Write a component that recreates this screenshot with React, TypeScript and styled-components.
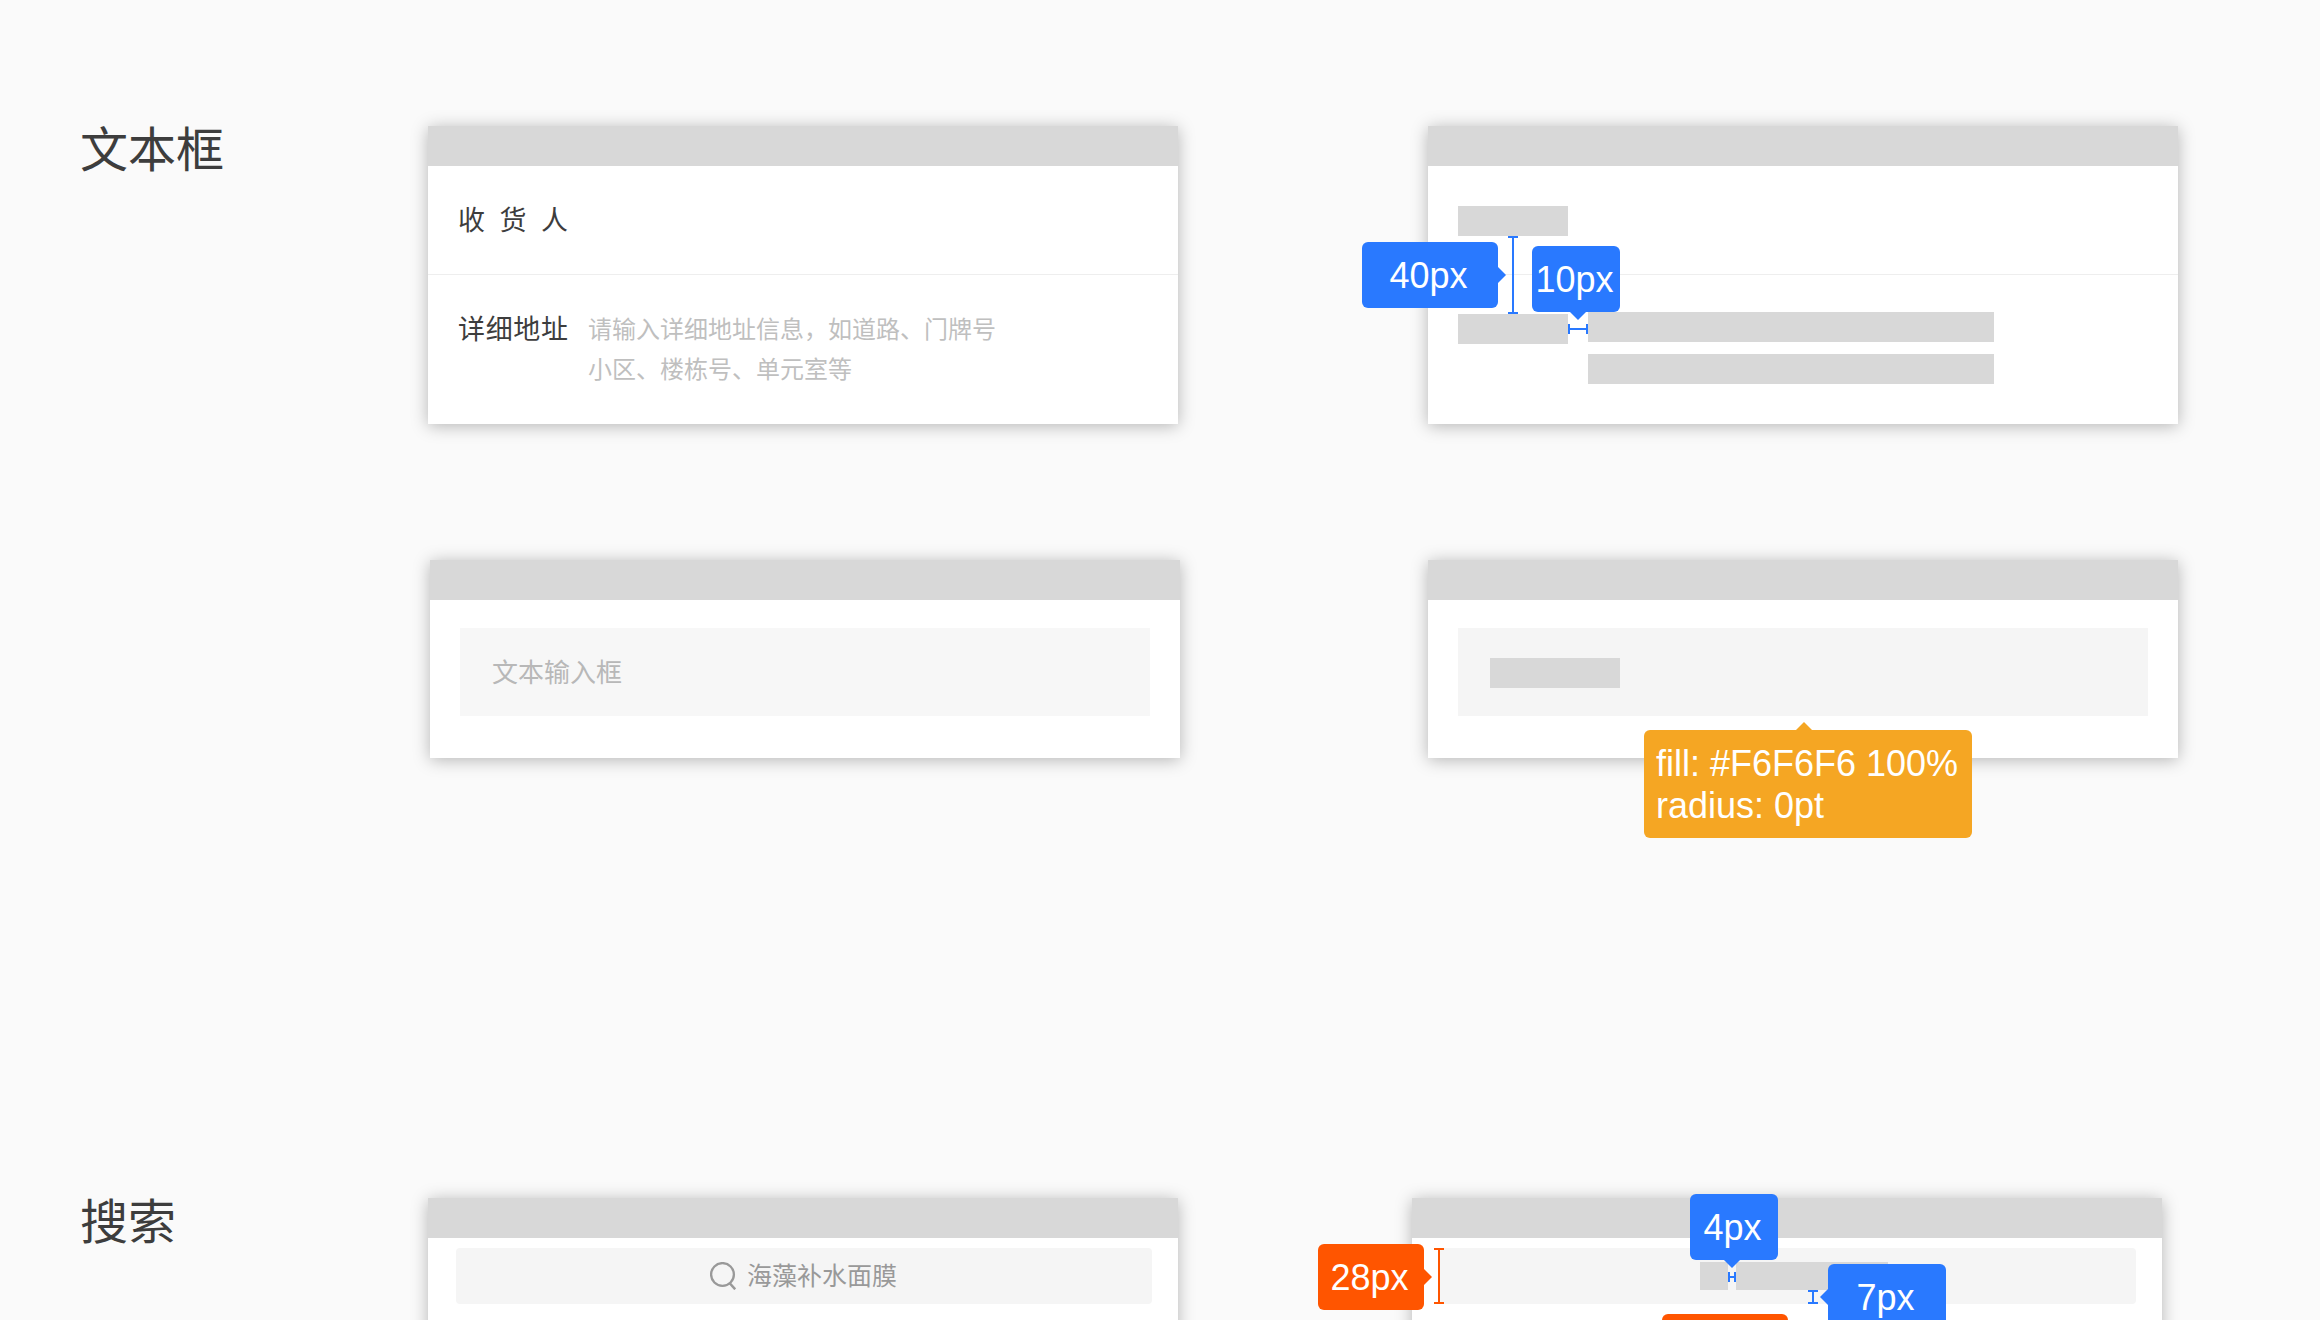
import React from "react";
import styled, { createGlobalStyle, css } from "styled-components";

const BLUE = "#2979ff";
const ORANGE = "#ff5500";
const AMBER = "#f5a623";

const GlobalStyle = createGlobalStyle`
  *, *::before, *::after { box-sizing: border-box; }
  body {
    margin: 0;
    background: #fafafa;
    color: #3d3d3d;
    font-family: "Liberation Sans", "Noto Sans CJK SC", sans-serif;
  }
  input, textarea { font-family: inherit; }
`;

const Page = styled.main`
  height: 100vh;
  overflow: hidden;
  padding: 126px 142px 0 80px;
  display: flex;
  flex-direction: column;
  gap: 440px;
`;

const Section = styled.section`
  display: flex;
  align-items: flex-start;
`;

const Title = styled.h2`
  margin: 0;
  flex: 0 0 348px;
  font-size: 48px;
  line-height: 50px;
  font-weight: 400;
`;

const Examples = styled.div`
  flex: 1;
  display: flex;
  flex-direction: column;
  gap: 136px;
`;

const Pair = styled.div<{ $gap?: number; $start?: number; $end?: number }>`
  display: grid;
  grid-template-columns: 1fr 1fr;
  column-gap: ${(p) => p.$gap ?? 250}px;
  padding-left: ${(p) => p.$start ?? 0}px;
  padding-right: ${(p) => p.$end ?? 0}px;
`;

const Card = styled.article`
  position: relative;
  background: #fff;
  box-shadow: 0 2px 16px rgba(0, 0, 0, 0.28);
`;

const StatusBar = styled.div`
  height: 40px;
  background: #d8d8d8;
`;

const FormRow = styled.div<{ $tall?: boolean }>`
  display: flex;
  gap: 20px;
  padding: 35px 30px 33px;
  align-items: flex-start;
  & + & { border-top: 1px solid #eee; }
  ${(p) => p.$tall && css`padding-bottom: 34px;`}
`;

const Label = styled.label`
  flex: 0 0 110px;
  font-size: 27px;
  line-height: 40px;
  font-weight: 400;
  text-align-last: justify;
  white-space: nowrap;
`;

const fieldReset = css`
  display: block;
  flex: 1;
  min-width: 0;
  margin: 0;
  padding: 0;
  border: 0;
  outline: 0;
  background: transparent;
  color: #3d3d3d;
  font-weight: 400;
  &::placeholder { color: #bfbfbf; opacity: 1; }
`;

const LineInput = styled.input`
  ${fieldReset}
  height: 40px;
  font-size: 24px;
`;

const AreaInput = styled.textarea`
  ${fieldReset}
  height: 80px;
  resize: none;
  overflow: hidden;
  font-size: 24px;
  line-height: 40px;
`;

const BoxBody = styled.div`
  padding: 28px 30px 42px;
`;

const BoxInput = styled.input`
  ${fieldReset}
  width: 100%;
  height: 88px;
  padding: 2px 32px 0;
  background: #f7f7f7;
  font-size: 26px;
  &::placeholder { color: #b8b8b8; }
`;

const BoxOutline = styled.div`
  display: flex;
  align-items: center;
  height: 88px;
  padding: 2px 32px 0;
  background: #f5f5f5;
`;

const Block = styled.div<{ $w: number; $h?: number }>`
  width: ${(p) => p.$w}px;
  height: ${(p) => p.$h ?? 30}px;
  background: #d8d8d8;
`;

const OutlineRow = styled.div<{ $tall?: boolean }>`
  display: flex;
  gap: 20px;
  align-items: flex-start;
  padding: 40px 30px 38px;
  & + & { border-top: 1px solid #eee; }
  ${(p) => p.$tall && css`padding-top: 37px; padding-bottom: 40px;`}
`;

const LabelCell = styled.div`
  padding-top: 2px;
`;

const Lines = styled.div`
  display: flex;
  flex-direction: column;
  gap: 12px;
`;

const SearchBody = styled.div`
  padding: 10px 26px 42px 28px;
`;

const SearchBox = styled.label`
  display: flex;
  align-items: center;
  justify-content: center;
  gap: 11px;
  height: 56px;
  border-radius: 4px;
  background: #f5f5f5;
`;

const SearchInput = styled.input`
  ${fieldReset}
  flex: 0 0 151px;
  height: 40px;
  font-size: 25px;
  &::placeholder { color: #999; }
`;

const SearchOutline = styled.div`
  display: flex;
  align-items: center;
  gap: 8px;
  height: 56px;
  padding-left: 260px;
  border-radius: 4px;
  background: #f5f5f5;
`;

type Side = "left" | "right" | "top" | "bottom";

const arrows: Record<Side, (shift: number) => ReturnType<typeof css>> = {
  right: () => css`left: 100%; top: 50%; margin-top: -8px; width: 8px; height: 16px; clip-path: polygon(0 0, 100% 50%, 0 100%);`,
  left: () => css`right: 100%; top: 50%; margin-top: -8px; width: 8px; height: 16px; clip-path: polygon(100% 0, 0 50%, 100% 100%);`,
  bottom: (shift) => css`top: 100%; left: 50%; margin-left: ${shift - 8}px; width: 16px; height: 8px; clip-path: polygon(0 0, 100% 0, 50% 100%);`,
  top: (shift) => css`bottom: 100%; left: 50%; margin-left: ${shift - 8}px; width: 16px; height: 8px; clip-path: polygon(50% 0, 100% 100%, 0 100%);`,
};

const Tag = styled.div<{ $x: number; $y: number; $w: number; $color: string; $side?: Side; $shift?: number }>`
  position: absolute;
  left: ${(p) => p.$x}px;
  top: ${(p) => p.$y}px;
  width: ${(p) => p.$w}px;
  height: 66px;
  padding-right: 3px;
  border-radius: 6px;
  background: ${(p) => p.$color};
  color: #fff;
  font-size: 36px;
  line-height: 68px;
  text-align: center;
  white-space: nowrap;
  &::after {
    content: ${(p) => (p.$side ? '""' : "none")};
    position: absolute;
    background: inherit;
    ${(p) => p.$side && arrows[p.$side](p.$shift ?? 0)}
  }
`;

const NoteTag = styled(Tag)`
  height: auto;
  padding: 13px 12px 11px;
  line-height: 42px;
  text-align: left;
`;

const Measure = styled.div<{ $x: number; $y: number; $length: number; $color: string; $vertical?: boolean }>`
  position: absolute;
  left: ${(p) => p.$x}px;
  top: ${(p) => p.$y}px;
  width: ${(p) => (p.$vertical ? 10 : p.$length)}px;
  height: ${(p) => (p.$vertical ? p.$length : 10)}px;
  border: solid ${(p) => p.$color};
  border-width: ${(p) => (p.$vertical ? "2px 0" : "0 2px")};
  &::before {
    content: "";
    position: absolute;
    background: ${(p) => p.$color};
    ${(p) =>
      p.$vertical
        ? css`left: 4px; width: 2px; top: 0; bottom: 0;`
        : css`top: 4px; height: 2px; left: 0; right: 0;`}
  }
`;

function SearchIcon() {
  return (
    <svg width="26" height="28" viewBox="0 0 26 28" fill="none" stroke="#999" strokeWidth="2.3" aria-hidden="true">
      <circle cx="12.5" cy="12.5" r="11.4" />
      <path d="M19.5 21 L25.2 27.3" strokeWidth="2.5" />
    </svg>
  );
}

export default function App() {
  return (
    <>
      <GlobalStyle />
      <Page>
        <Section>
          <Title>文本框</Title>
          <Examples>
            <Pair>
              <Card>
                <StatusBar />
                <FormRow>
                  <Label htmlFor="receiver">收 货 人</Label>
                  <LineInput id="receiver" type="text" />
                </FormRow>
                <FormRow $tall>
                  <Label htmlFor="address">详细地址</Label>
                  <AreaInput
                    id="address"
                    rows={2}
                    placeholder={"请输入详细地址信息，如道路、门牌号\n小区、楼栋号、单元室等"}
                  />
                </FormRow>
              </Card>
              <Card>
                <StatusBar />
                <OutlineRow>
                  <Block $w={110} />
                </OutlineRow>
                <OutlineRow $tall>
                  <LabelCell>
                    <Block $w={110} />
                  </LabelCell>
                  <Lines>
                    <Block $w={406} />
                    <Block $w={406} />
                  </Lines>
                </OutlineRow>
                <Measure $x={80} $y={110} $length={78} $color={BLUE} $vertical />
                <Tag $x={-66} $y={116} $w={136} $color={BLUE} $side="right">40px</Tag>
                <Measure $x={140} $y={198} $length={20} $color={BLUE} />
                <Tag $x={104} $y={120} $w={88} $color={BLUE} $side="bottom" $shift={2}>10px</Tag>
              </Card>
            </Pair>
            <Pair $start={2} $gap={248}>
              <Card>
                <StatusBar />
                <BoxBody>
                  <BoxInput type="text" aria-label="文本输入框" placeholder="文本输入框" />
                </BoxBody>
              </Card>
              <Card>
                <StatusBar />
                <BoxBody>
                  <BoxOutline>
                    <Block $w={130} />
                  </BoxOutline>
                </BoxBody>
                <NoteTag $x={216} $y={170} $w={328} $color={AMBER} $side="top" $shift={-4}>
                  fill: #F6F6F6 100%
                  <br />
                  radius: 0pt
                </NoteTag>
              </Card>
            </Pair>
          </Examples>
        </Section>
        <Section>
          <Title>搜索</Title>
          <Examples>
            <Pair $gap={234} $end={16}>
              <Card>
                <StatusBar />
                <SearchBody>
                  <SearchBox>
                    <SearchIcon />
                    <SearchInput type="text" aria-label="搜索" placeholder="海藻补水面膜" />
                  </SearchBox>
                </SearchBody>
              </Card>
              <Card>
                <StatusBar />
                <SearchBody>
                  <SearchOutline>
                    <Block $w={28} $h={28} />
                    <Block $w={152} $h={28} />
                  </SearchOutline>
                </SearchBody>
                <Measure $x={22} $y={50} $length={56} $color={ORANGE} $vertical />
                <Tag $x={-94} $y={46} $w={106} $color={ORANGE} $side="right">28px</Tag>
                <Measure $x={316} $y={74} $length={8} $color={BLUE} />
                <Tag $x={278} $y={-4} $w={88} $color={BLUE} $side="bottom" $shift={-2}>4px</Tag>
                <Measure $x={396} $y={92} $length={14} $color={BLUE} $vertical />
                <Tag $x={416} $y={66} $w={118} $color={BLUE} $side="left">7px</Tag>
                <Tag $x={250} $y={116} $w={126} $color={ORANGE} />
              </Card>
            </Pair>
          </Examples>
        </Section>
      </Page>
    </>
  );
}
